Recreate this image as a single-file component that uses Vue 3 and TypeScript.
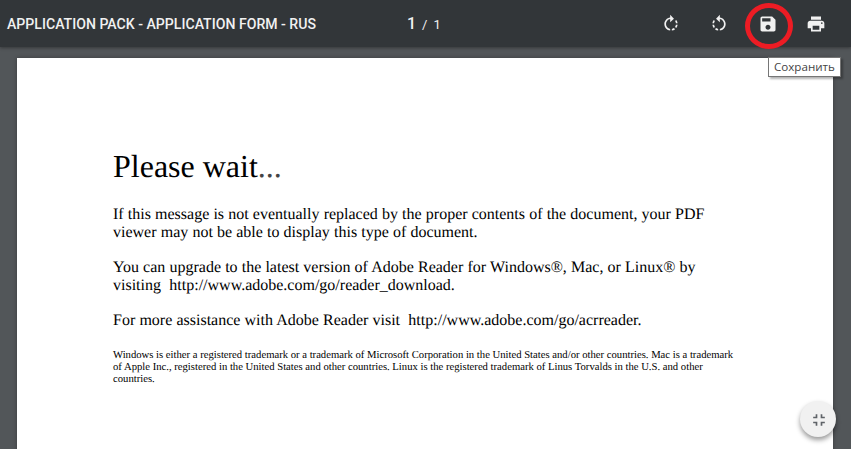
<script setup lang="ts">
const tools = [
  {
    name: 'rotate-right',
    d: 'M15.55 5.55L11 1v3.07C7.06 4.56 4 7.92 4 12s3.05 7.44 7 7.93v-2.02c-2.84-.48-5-2.94-5-5.91s2.16-5.43 5-5.91V10l4.55-4.45zM19.93 11c-.17-1.39-.72-2.73-1.62-3.89l-1.42 1.42c.54.75.88 1.6 1.02 2.47h2.02zM13 17.9v2.02c1.39-.17 2.74-.71 3.9-1.61l-1.44-1.44c-.75.54-1.59.89-2.46 1.03zm3.89-2.42l1.42 1.41c.9-1.16 1.45-2.5 1.62-3.89h-2.02c-.14.87-.48 1.72-1.02 2.48z'
  },
  {
    name: 'rotate-left',
    d: 'M7.11 8.53L5.7 7.11C4.8 8.27 4.24 9.61 4.07 11h2.02c.14-.87.49-1.72 1.02-2.47zM6.09 13H4.07c.17 1.39.72 2.73 1.62 3.89l1.41-1.42c-.52-.75-.87-1.59-1.01-2.47zm1.01 5.32c1.16.9 2.51 1.44 3.9 1.61V17.9c-.87-.15-1.71-.49-2.46-1.03L7.1 18.32zM13 4.07V1L8.45 5.55 13 10V6.09c2.84.48 5 2.94 5 5.91s-2.16 5.43-5 5.91v2.02c3.95-.49 7-3.85 7-7.93s-3.05-7.44-7-7.93z'
  },
  {
    name: 'save',
    d: 'M17 3H5c-1.11 0-2 .9-2 2v14c0 1.1.89 2 2 2h14c1.1 0 2-.9 2-2V7l-4-4zm-5 16c-1.66 0-3-1.34-3-3s1.34-3 3-3 3 1.34 3 3-1.34 3-3 3zm3-10H5V5h10v4z'
  },
  {
    name: 'print',
    d: 'M19 8H5c-1.66 0-3 1.34-3 3v6h4v4h12v-4h4v-6c0-1.66-1.34-3-3-3zm-3 11H8v-5h8v5zm3-7c-.55 0-1-.45-1-1s.45-1 1-1 1 .45 1 1-.45 1-1 1zm-1-9H6v4h12V3z'
  }
]

const intro = [
  'If this message is not eventually replaced by the proper contents of the document, your PDF',
  'viewer may not be able to display this type of document.'
]
const upgrade = [
  'You can upgrade to the latest version of Adobe Reader for Windows®, Mac, or Linux® by',
  'visiting  http://www.adobe.com/go/reader_download.'
]
const assistance = ['For more assistance with Adobe Reader visit  http://www.adobe.com/go/acrreader.']
const fine = [
  'Windows is either a registered trademark or a trademark of Microsoft Corporation in the United States and/or other countries. Mac is a trademark',
  'of Apple Inc., registered in the United States and other countries. Linux is the registered trademark of Linus Torvalds in the U.S. and other',
  'countries.'
]
const paragraphs = [intro, upgrade, assistance]
</script>

<template>
  <div class="viewer">
    <header class="toolbar">
      <div class="title">APPLICATION PACK - APPLICATION FORM - RUS</div>
      <div class="pager">
        <span class="current">1</span>
        <span class="sep">/</span>
        <span class="total">1</span>
      </div>
      <div class="tools">
        <button
          v-for="tool in tools"
          :key="tool.name"
          class="tool"
          type="button"
          :aria-label="tool.name"
        >
          <svg width="20" height="20" viewBox="0 0 24 24" fill="#f1f1f1">
            <path :d="tool.d" />
          </svg>
        </button>
      </div>
    </header>

    <main class="stage">
      <section class="page">
        <h1 class="heading">Please wait<span class="dots">...</span></h1>
        <p v-for="lines in paragraphs" :key="lines[0]" class="para">
          <span v-for="line in lines" :key="line" class="line">{{ line }}</span>
        </p>
        <p class="fine">
          <span v-for="line in fine" :key="line" class="line">{{ line }}</span>
        </p>
      </section>
    </main>

    <!-- annotation drawn over the save button -->
    <div class="marker" aria-hidden="true"></div>
    <div class="tooltip">Сохранить</div>

    <button class="fab" type="button" aria-label="fit">
      <svg width="20" height="20" viewBox="0 0 24 24" fill="#5f6368">
        <path d="M5 16h3v3h2v-5H5v2zm3-8H5v2h5V5H8v3zm6 11h2v-3h3v-2h-5v5zm2-11V5h-2v5h5V8h-3z" />
      </svg>
    </button>
  </div>
</template>

<style scoped>
.viewer {
  position: relative;
  display: flex;
  flex-direction: column;
  width: 851px;
  height: 449px;
  overflow: hidden;
  background: #525659;
}

.toolbar {
  position: relative;
  z-index: 1;
  display: flex;
  align-items: center;
  flex: none;
  height: 47px;
  padding: 0 15px 0 7px;
  background: #323639;
  box-shadow: 0 1px 3px rgba(0, 0, 0, 0.35);
  color: #f1f1f1;
  font-family: Roboto, "Liberation Sans", sans-serif;
}

.title {
  width: 400px;
  font-size: 14.1px;
  font-weight: 500;
  white-space: nowrap;
}

.pager {
  display: flex;
  align-items: baseline;
  gap: 6px;
  font-size: 13px;
}

.current {
  font-size: 16px;
  font-weight: 500;
}

.tools {
  display: flex;
  gap: 8.3px;
  margin-left: auto;
}

.tool {
  display: flex;
  align-items: center;
  justify-content: center;
  width: 40px;
  height: 40px;
  padding: 0;
  border: 0;
  background: none;
}

.stage {
  flex: 1;
  min-height: 0;
  padding: 11px 18px 0 17px;
}

.page {
  height: 100%;
  padding: 90px 0 0 96px;
  background: #fff;
  box-shadow: 0 0 4px rgba(0, 0, 0, 0.3);
  color: #000;
  font-family: "Liberation Serif", "Times New Roman", serif;
  text-rendering: geometricPrecision;
}

.heading {
  margin: 0 0 21px;
  font-size: 32px;
  font-weight: 400;
  line-height: 37px;
}

.dots {
  font-weight: 400;
  color: #444;
}

.para {
  margin: 0 0 17px;
  font-size: 16px;
  line-height: 18px;
  word-spacing: 0.15px;
}

.fine {
  margin: 19px 0 0;
  font-size: 10.67px;
  line-height: 12.2px;
}

.line {
  display: block;
  white-space: pre;
}

.marker {
  position: absolute;
  z-index: 2;
  left: 745px;
  top: 3px;
  width: 48px;
  height: 46px;
  box-sizing: border-box;
  border: 5px solid #ed1c24;
  border-radius: 50%;
}

.tooltip {
  position: absolute;
  z-index: 2;
  left: 768px;
  top: 57px;
  padding: 1px 5px 2px;
  border: 1px solid #767676;
  background: #fff;
  box-shadow: 2px 2px 2px rgba(0, 0, 0, 0.3);
  color: #444;
  font-family: "Open Sans", "Noto Sans", sans-serif;
  font-size: 11.6px;
  line-height: 15px;
}

.fab {
  position: absolute;
  left: 800px;
  top: 401px;
  display: flex;
  align-items: center;
  justify-content: center;
  width: 36px;
  height: 36px;
  padding: 1px 0 0 1px;
  border: 0;
  border-radius: 50%;
  background: #f1f1f1;
  box-shadow: 0 3px 5px rgba(0, 0, 0, 0.4);
}
</style>

<style>
html,
body {
  overflow: hidden;
}
</style>
